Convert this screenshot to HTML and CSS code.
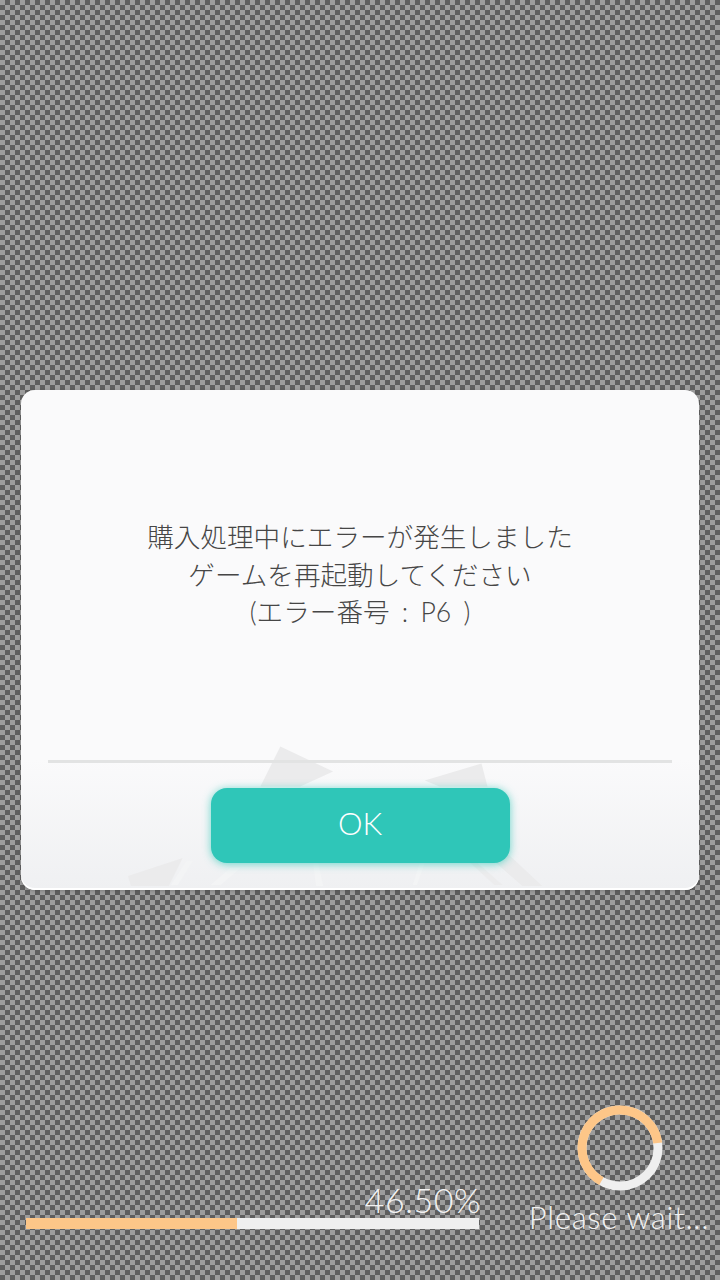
FILE: index.html
```html
<!DOCTYPE html>
<html lang="ja">
<head>
<meta charset="utf-8">
<title>Error</title>
<link rel="stylesheet" href="styles.css">
</head>
<body>
<div class="screen">
  <section class="dialog">
    <svg class="dialog-art" viewBox="0 0 678 500" aria-hidden="true">
      <polygon class="art" points="259,358 312,383 279,398 239,398"/>
      <polygon class="art" points="404,392 461,375 467,398 419,398"/>
      <polygon class="art" points="106,488 161,470 147,498 109,498"/>
      <polygon class="art" points="489,467 522,498 502,498 470,470"/>
      <polygon class="art faint" points="457,475 482,497 474,497 450,475"/>
      <polygon class="art light" points="219,480 199,497 189,497 209,480"/>
      <polygon class="art light" points="171,473 156,497 149,497 165,473"/>
      <polygon class="art light" points="404,475 396,497 392,497 399,475"/>
      <polygon class="art light" points="297,475 302,498 295,498 292,475"/>
    </svg>
    <div class="message">
      <p>購入処理中にエラーが発生しました</p>
      <p>ゲームを再起動してください</p>
      <p>(エラー番号 : P6 )</p>
    </div>
    <div class="divider"></div>
    <div class="actions"><button class="ok">OK</button></div>
  </section>
  <footer class="status">
    <div class="progress">
      <div class="percent">46.50%</div>
      <div class="track"><div class="fill" style="width:46.5%"></div></div>
    </div>
    <div class="waiting">
      <svg class="ring" viewBox="0 0 86 86" aria-hidden="true">
        <circle class="ring-base" cx="43" cy="43" r="38"/>
        <path class="ring-arc" d="M80.7 38 A38 38 0 1 0 24.4 76.1"/>
      </svg>
      <div class="wait-text">Please wait...</div>
    </div>
  </footer>
</div>
</body>
</html>
```
FILE: styles.css
```css
* { box-sizing: border-box; }
html, body { margin: 0; padding: 0; }
body { font-family: "Inter", "Noto Sans CJK JP", sans-serif; }
.screen {
  width: 720px;
  height: 1280px;
  display: flex;
  flex-direction: column;
  padding: 390px 21px 0;
  background-color: #9c9c9c;
  background-image: conic-gradient(#5e5e5e 25%, transparent 0 50%, #5e5e5e 0 75%, transparent 0);
  background-size: 10px 10px;
  overflow: hidden;
}
.dialog {
  position: relative;
  width: 678px;
  height: 500px;
  flex: none;
  background: linear-gradient(#fafafb 0, #fafafb 370px, #eff0f2 100%);
  border-radius: 14px;
  box-shadow: 0 1px 3px rgba(60,60,60,.3), inset 0 -2px 0 #fff;
  display: flex;
  flex-direction: column;
  align-items: center;
  overflow: hidden;
}
.dialog-art { position: absolute; left: 0; top: 0; width: 678px; height: 498px; }
.art { fill: #ebebec; }
.art.faint { fill: #ececed; }
.art.light { fill: #f3f4f5; }
.message {
  position: relative;
  margin-top: 129px;
  height: 241px;
  font-family: "Lato", "Noto Sans CJK JP", sans-serif;
  font-weight: 300;
  font-size: 26.6px;
  line-height: 37.5px;
  word-spacing: 5px;
  color: #464646;
  text-align: center;
}
.message p { margin: 0; }
.divider { position: relative; flex: none; width: 624px; height: 3px; background: #e2e3e3; }
.actions { position: relative; margin-top: 25px; }
.ok {
  display: block;
  width: 299px;
  height: 75px;
  padding: 0 0 6px;
  border: 0;
  border-radius: 16px;
  background: #2fc6b8;
  box-shadow: 0 1px 8px rgba(46,199,184,.7);
  color: #fff;
  font-family: "Lato", sans-serif;
  font-weight: 300;
  font-size: 31px;
}
.status {
  margin: 215px -21px 0 0;
  display: flex;
  align-items: flex-end;
  padding-left: 5px;
}
.progress { flex: none; width: 453px; }
.percent {
  margin: 0 -2px 0 0;
  text-align: right;
  font-family: "Lato", sans-serif;
  font-weight: 300;
  font-size: 34px;
  line-height: 36px;
  color: #f2f2f2;
  letter-spacing: .5px;
}
.track { height: 11px; background: #efefef; }
.fill { height: 100%; background: #ffc07a; opacity: .88; }
.waiting {
  flex: none;
  margin: 0 0 -8px 50px;
  width: 180px;
  display: flex;
  flex-direction: column;
  align-items: center;
}
.ring { width: 86px; height: 86px; margin-left: 2px; }
.ring-base { fill: none; stroke: #efefef; stroke-width: 9; }
.ring-arc { fill: none; stroke: #ffc07a; stroke-width: 9; opacity: .88; }
.wait-text {
  margin-top: 6px;
  font-family: "Lato", sans-serif;
  font-weight: 300;
  font-size: 31px;
  line-height: 40px;
  color: #f2f2f2;
  white-space: nowrap;
  letter-spacing: .7px;
}
```
